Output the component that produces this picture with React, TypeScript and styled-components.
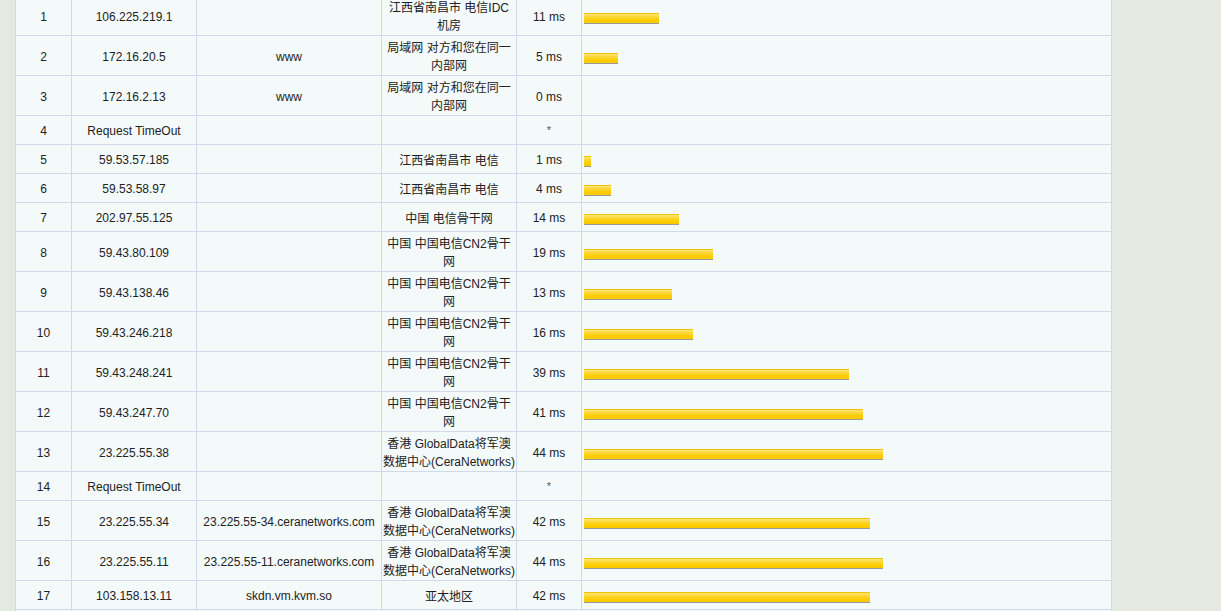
import React from "react";
import styled, { createGlobalStyle } from "styled-components";

const Global = createGlobalStyle`
  html, body { margin: 0; padding: 0; background: #e4e9e2; overflow: hidden; }
  body { font-family: "Liberation Sans", "Noto Sans CJK SC", sans-serif; font-size: 12px; color: #222; }
`;

const Page = styled.div`
  padding: 0 0 0 15px;
  margin-top: -5px;
  height: 616px;
  overflow: hidden;
`;

const Table = styled.div`
  display: grid;
  grid-template-columns: 55px 124px 184px 134px 64px 529px;
  gap: 1px;
  padding: 1px;
  background: #d0dbe9;
  width: max-content;
`;

const Cell = styled.div<{ $tall?: boolean }>`
  background: #f4fafa;
  min-height: ${(p) => (p.$tall ? "39px" : "28px")};
  box-sizing: border-box;
  padding: 4px 0 0;
  line-height: 17.5px;
  display: flex;
  align-items: center;
  justify-content: center;
  text-align: center;
  font-family: "Liberation Sans", "Noto Sans CJK SC", sans-serif;
`;

const CjkCell = styled(Cell)`
  flex-direction: column;
  line-height: 18px;
  padding-top: 3px;
`;

const Line = styled.span`
  white-space: nowrap;
  display: block;
`;

const Star = styled.span`
  color: #556;
  font-size: 11px;
  margin-top: -3px;
`;

const BarCell = styled(Cell)`
  justify-content: flex-start;
  padding-left: 2px;
  padding-top: 5px;
`;

const Bar = styled.div`
  height: 11px;
  box-sizing: border-box;
  border-top: 1px solid #f2c200;
  border-bottom: 1px solid #9a9a9a;
  background: linear-gradient(to bottom, #ffe478 0%, #ffd633 35%, #ffcc00 70%, #f8c800 100%);
`;

type Hop = {
  n: number;
  ip: string;
  host: string;
  loc: string[];
  ms: number | null;
};

const hops: Hop[] = [
  { n: 1, ip: "106.225.219.1", host: "", loc: ["江西省南昌市 电信IDC", "机房"], ms: 11 },
  { n: 2, ip: "172.16.20.5", host: "www", loc: ["局域网 对方和您在同一", "内部网"], ms: 5 },
  { n: 3, ip: "172.16.2.13", host: "www", loc: ["局域网 对方和您在同一", "内部网"], ms: 0 },
  { n: 4, ip: "Request TimeOut", host: "", loc: [], ms: null },
  { n: 5, ip: "59.53.57.185", host: "", loc: ["江西省南昌市 电信"], ms: 1 },
  { n: 6, ip: "59.53.58.97", host: "", loc: ["江西省南昌市 电信"], ms: 4 },
  { n: 7, ip: "202.97.55.125", host: "", loc: ["中国 电信骨干网"], ms: 14 },
  { n: 8, ip: "59.43.80.109", host: "", loc: ["中国 中国电信CN2骨干", "网"], ms: 19 },
  { n: 9, ip: "59.43.138.46", host: "", loc: ["中国 中国电信CN2骨干", "网"], ms: 13 },
  { n: 10, ip: "59.43.246.218", host: "", loc: ["中国 中国电信CN2骨干", "网"], ms: 16 },
  { n: 11, ip: "59.43.248.241", host: "", loc: ["中国 中国电信CN2骨干", "网"], ms: 39 },
  { n: 12, ip: "59.43.247.70", host: "", loc: ["中国 中国电信CN2骨干", "网"], ms: 41 },
  { n: 13, ip: "23.225.55.38", host: "", loc: ["香港 GlobalData将军澳", "数据中心(CeraNetworks)"], ms: 44 },
  { n: 14, ip: "Request TimeOut", host: "", loc: [], ms: null },
  { n: 15, ip: "23.225.55.34", host: "23.225.55-34.ceranetworks.com", loc: ["香港 GlobalData将军澳", "数据中心(CeraNetworks)"], ms: 42 },
  { n: 16, ip: "23.225.55.11", host: "23.225.55-11.ceranetworks.com", loc: ["香港 GlobalData将军澳", "数据中心(CeraNetworks)"], ms: 44 },
  { n: 17, ip: "103.158.13.11", host: "skdn.vm.kvm.so", loc: ["亚太地区"], ms: 42 },
];

export default function App() {
  return (
    <Page>
      <Global />
      <Table>
        {hops.map((h) => {
          const tall = h.loc.length > 1;
          return (
            <React.Fragment key={h.n}>
              <Cell $tall={tall}>{h.n}</Cell>
              <Cell $tall={tall}>{h.ip}</Cell>
              <Cell $tall={tall}>{h.host}</Cell>
              <CjkCell $tall={tall}>
                {h.loc.map((l, i) => (
                  <Line key={i}>{l}</Line>
                ))}
              </CjkCell>
              <Cell $tall={tall}>{h.ms === null ? <Star>*</Star> : `${h.ms} ms`}</Cell>
              <BarCell $tall={tall}>
                {h.ms ? <Bar style={{ width: Math.round(h.ms * 6.8) }} /> : null}
              </BarCell>
            </React.Fragment>
          );
        })}
        <Cell />
        <Cell />
        <Cell />
        <Cell />
        <Cell />
        <Cell />
      </Table>
    </Page>
  );
}
